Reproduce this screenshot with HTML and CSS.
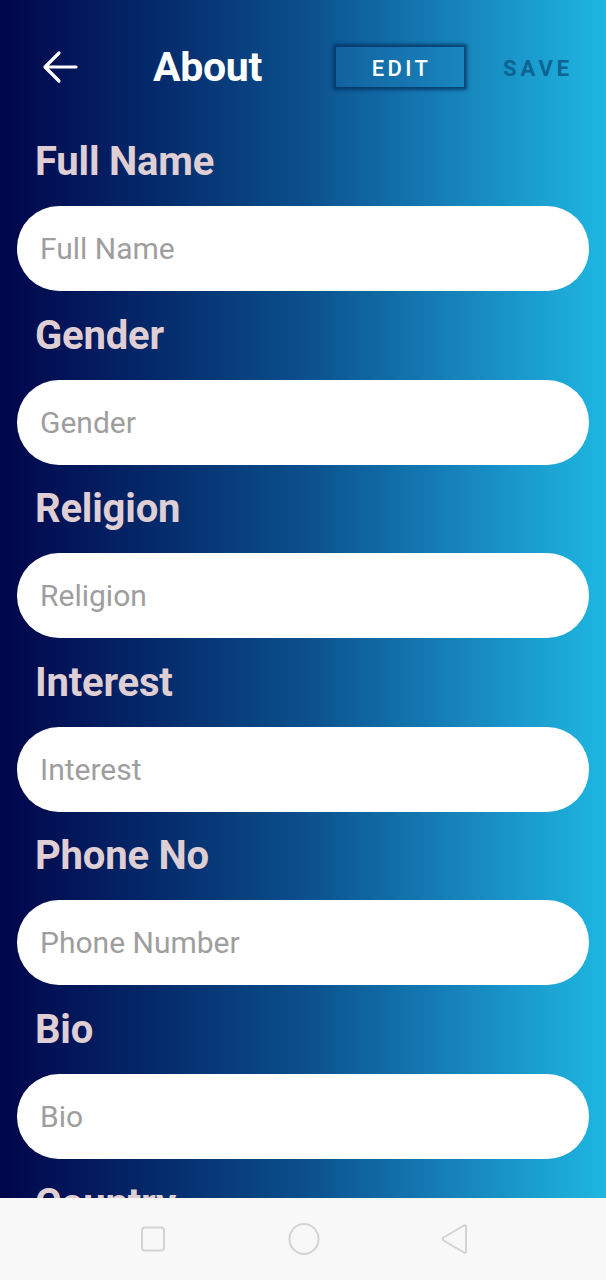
FILE: index.html
```html
<!DOCTYPE html>
<html lang="en">
<head>
<meta charset="utf-8">
<title>About</title>
<link rel="stylesheet" href="styles.css">
</head>
<body>
<div class="screen">
  <main class="content">
    <header class="topbar">
      <button class="back" aria-label="Back">
        <svg width="36" height="36" viewBox="0 0 36 36"><path d="M34 18H4M17 4L3 18l14 14" fill="none" stroke="#fff" stroke-width="3.2" stroke-linecap="round" stroke-linejoin="round"/></svg>
      </button>
      <h1 class="title">About</h1>
      <button class="edit">EDIT</button>
      <button class="save">SAVE</button>
    </header>
    <section class="form">
      <div class="field"><label class="label">Full Name</label><div class="input">Full Name</div></div>
      <div class="field"><label class="label">Gender</label><div class="input">Gender</div></div>
      <div class="field"><label class="label">Religion</label><div class="input">Religion</div></div>
      <div class="field"><label class="label">Interest</label><div class="input">Interest</div></div>
      <div class="field"><label class="label">Phone No</label><div class="input">Phone Number</div></div>
      <div class="field"><label class="label">Bio</label><div class="input">Bio</div></div>
      <div class="field"><label class="label">Country</label><div class="input">Country</div></div>
    </section>
  </main>
  <nav class="navbar">
    <svg class="nav-square" width="26" height="28" viewBox="0 0 26 28"><rect x="2" y="2.5" width="22" height="23" rx="3" fill="none" stroke="#d3d3d3" stroke-width="2"/></svg>
    <svg class="nav-circle" width="34" height="34" viewBox="0 0 34 34"><ellipse cx="17" cy="17" rx="14.5" ry="15" fill="none" stroke="#d3d3d3" stroke-width="2"/></svg>
    <svg class="nav-back" width="30" height="34" viewBox="0 0 30 34"><path d="M25 3.5Q27 2.5 27 5V29Q27 31.5 25 30.5L4.5 18.5Q3 17 4.5 15.5Z" fill="none" stroke="#d3d3d3" stroke-width="2" stroke-linejoin="round"/></svg>
  </nav>
</div>
</body>
</html>
```

FILE: styles.css
```css
* { box-sizing: border-box; }
html, body { margin: 0; padding: 0; }
body {
  width: 606px;
  height: 1280px;
  overflow: hidden;
  font-family: Roboto, "Noto Sans", "Liberation Sans", sans-serif;
}
.screen {
  display: flex;
  flex-direction: column;
  height: 1280px;
}
.content {
  height: 1198px;
  overflow: hidden;
  background: linear-gradient(to right, #01054a 0%, #04296a 25%, #0b4f8c 50%, #1682ba 75%, #1eb7e2 100%);
}
.topbar {
  height: 140px;
  display: flex;
  align-items: center;
  padding: 0 34px 6px 42px;
}
.back {
  width: 36px;
  height: 36px;
  padding: 0;
  border: 0;
  background: none;
  display: flex;
}
.title {
  margin: 0 0 0 75px;
  flex: 1;
  color: #fff;
  font-size: 41px;
  font-weight: 700;
  letter-spacing: -0.3px;
}
.edit {
  width: 128px;
  height: 40px;
  margin-right: 39px;
  border: 0;
  background: rgba(40, 140, 200, 0.18);
  box-shadow: 0 0 3px 3px rgba(5, 45, 95, 0.75);
  color: #fff;
  font-family: inherit;
  font-size: 22px;
  font-weight: 500;
  letter-spacing: 3.4px;
  padding: 2px 0 0 3px;
}
.save {
  width: 69px;
  padding: 2px 0 0;
  border: 0;
  background: none;
  color: #0c6394;
  font-family: inherit;
  font-size: 22px;
  font-weight: 700;
  letter-spacing: 4px;
  text-align: left;
}
.form {
  padding: 0 17px;
}
.field {
  display: flex;
  flex-direction: column;
  padding-bottom: 22.6px;
}
.label {
  margin-left: 18px;
  height: 44px;
  line-height: 44px;
  color: #dfcfd4;
  font-size: 40px;
  font-weight: 700;
  letter-spacing: -0.2px;
}
.input {
  margin-top: 22px;
  height: 85px;
  border-radius: 42px;
  background: #fff;
  display: flex;
  align-items: center;
  padding-left: 23px;
  color: #9e9e9e;
  font-size: 30px;
}
.navbar {
  height: 82px;
  background: #f8f8f8;
  display: flex;
  align-items: center;
  justify-content: center;
}
.nav-square { margin-left: 2px; }
.nav-circle { margin-left: 121px; }
.nav-back { margin-left: 118px; }
```
